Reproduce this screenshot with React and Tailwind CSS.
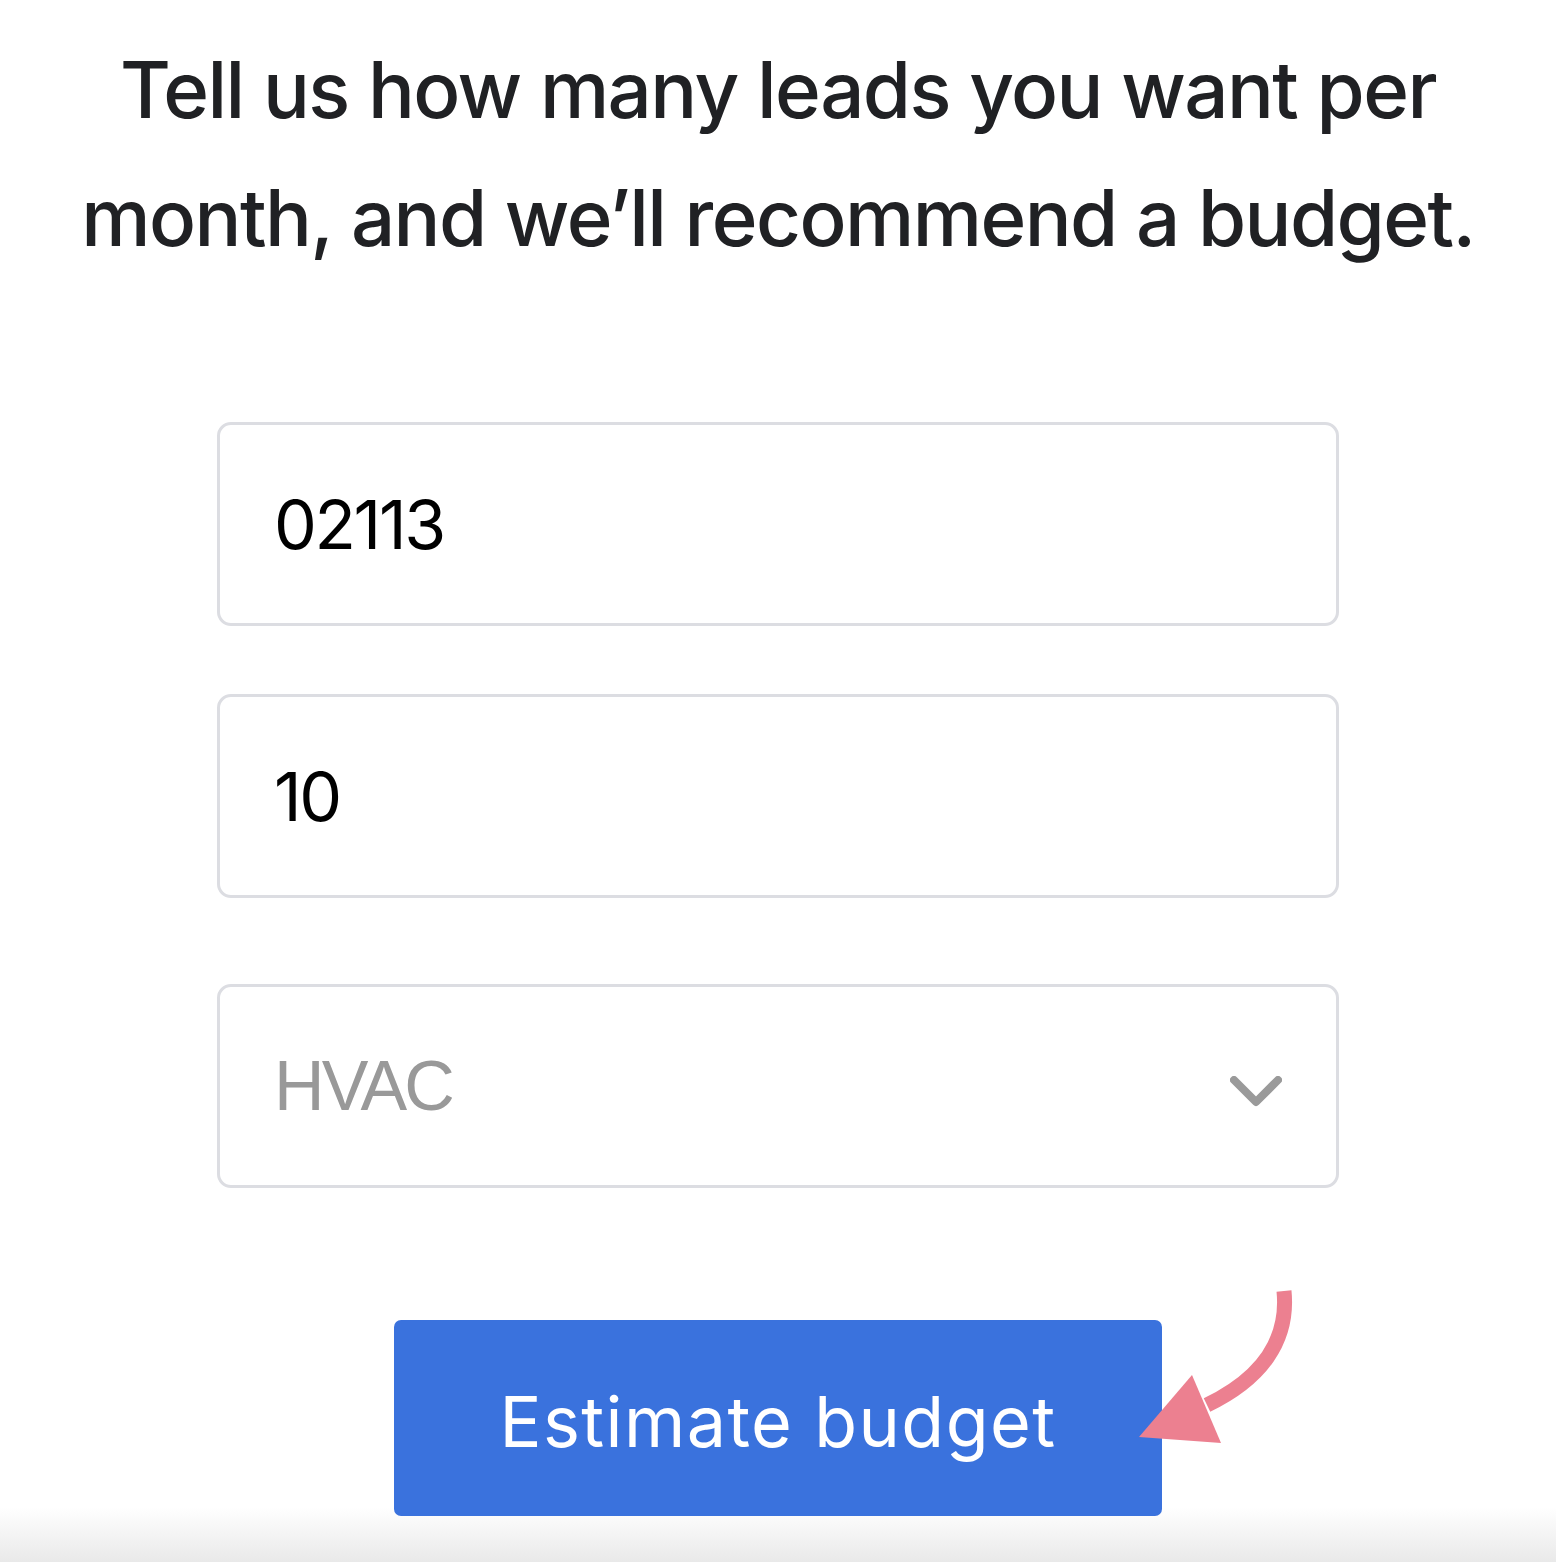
const fields = [
  { id: 'zip', value: '02113' },
  { id: 'leads', value: '10' },
];

export default function App() {
  return (
    <div className="relative min-h-[1562px] bg-[linear-gradient(to_bottom,#ffffff_0%,#ffffff_96.5%,#e9e9e9_100%)] font-['Inter',sans-serif]">
      <h1 className="pt-[26px] text-center text-[78px] font-medium leading-[128px] tracking-[-0.02em] text-[#202124]">
        Tell us how many leads you want per
        <br />
        month, and we’ll recommend a budget.
      </h1>

      <div className="mx-auto mt-[140px] flex w-[1122px] flex-col">
        {fields.map((field, i) => (
          <div
            key={field.id}
            className={`flex h-[204px] items-center rounded-[14px] border-[3px] border-[#dcdde2] bg-white pl-[54px] text-[68px] tracking-[-0.035em] text-black ${i > 0 ? 'mt-[68px]' : ''}`}
          >
            {field.value}
          </div>
        ))}

        <div className="mt-[86px] flex h-[204px] items-center justify-between rounded-[14px] border-[3px] border-[#dcdde2] bg-white pl-[54px] pr-[54px]">
          <span className="font-['Liberation_Sans',sans-serif] text-[70px] tracking-[-0.04em] text-[#999999]">HVAC</span>
          <svg width="52" height="32" viewBox="0 0 52 32" className="mt-[12px]">
            <path d="M4 4 L26 26 L48 4" fill="none" stroke="#9a9a9a" strokeWidth="8" strokeLinecap="round" strokeLinejoin="round" />
          </svg>
        </div>
      </div>

      <div className="relative mx-auto mt-[132px] w-[768px]">
        <button className="flex h-[196px] w-full items-center justify-center rounded-[7px] bg-[#3a72dd] pt-[6px] text-[70px] tracking-[0.02em] text-white">
          Estimate budget
        </button>
        <svg className="absolute left-[740px] top-[-34px]" width="160" height="170" viewBox="1135 1285 160 170">
          <path d="M1285 1290 C1290 1340 1262 1378 1208 1404" fill="none" stroke="#ec8090" strokeWidth="15" />
          <polygon points="1140,1436 1193,1374 1222,1442" fill="#ec8090" />
        </svg>
      </div>
    </div>
  );
}
